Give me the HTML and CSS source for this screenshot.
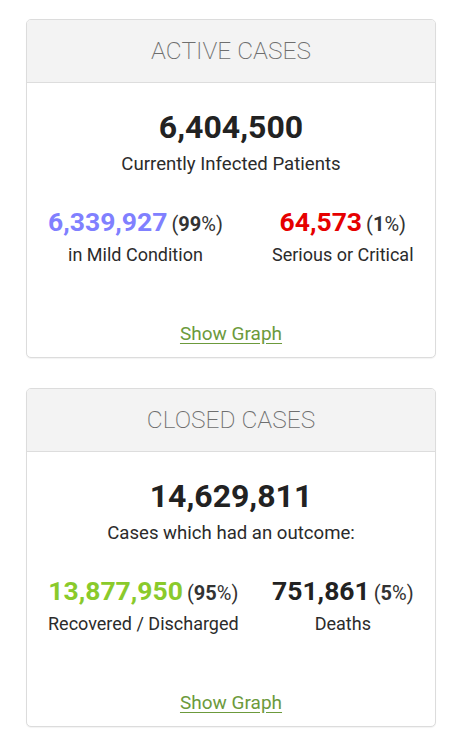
FILE: index.html
```html
<!DOCTYPE html>
<html>
<head>
<meta charset="utf-8">
<link rel="stylesheet" href="styles.css">
</head>
<body>
<div class="page">
  <div class="panel">
    <div class="panel-heading">ACTIVE CASES</div>
    <div class="panel-body">
      <div class="big-number">6,404,500</div>
      <div class="subtitle">Currently Infected Patients</div>
      <div class="split">
        <div class="cell">
          <div class="stat"><span class="num mild">6,339,927</span> <span class="pct">(<strong>99</strong>%)</span></div>
          <div class="label">in Mild Condition</div>
        </div>
        <div class="cell">
          <div class="stat"><span class="num critical">64,573</span> <span class="pct">(<strong>1</strong>%)</span></div>
          <div class="label">Serious or Critical</div>
        </div>
      </div>
      <div class="graph-link"><a href="#">Show Graph</a></div>
    </div>
  </div>

  <div class="panel">
    <div class="panel-heading">CLOSED CASES</div>
    <div class="panel-body">
      <div class="big-number">14,629,811</div>
      <div class="subtitle">Cases which had an outcome:</div>
      <div class="split">
        <div class="cell">
          <div class="stat"><span class="num recovered">13,877,950</span> <span class="pct">(<strong>95</strong>%)</span></div>
          <div class="label">Recovered / Discharged</div>
        </div>
        <div class="cell">
          <div class="stat"><span class="num deaths">751,861</span> <span class="pct">(<strong>5</strong>%)</span></div>
          <div class="label">Deaths</div>
        </div>
      </div>
      <div class="graph-link"><a href="#">Show Graph</a></div>
    </div>
  </div>
</div>
</body>
</html>
```

FILE: styles.css
```css
html, body {
  margin: 0;
  padding: 0;
  background: #ffffff;
}

body {
  font-family: Roboto, "Liberation Sans", Arial, sans-serif;
  color: #222;
}

.page {
  padding: 19px 16px 20px 26px;
  display: flex;
  flex-direction: column;
  gap: 30px;
}

.panel {
  border: 1px solid #dcdcdc;
  border-radius: 5px;
  box-shadow: 0 1px 1px rgba(0, 0, 0, 0.05);
  overflow: hidden;
  background: #fff;
}

.panel-heading {
  background: #f3f3f3;
  border-bottom: 1px solid #dddddd;
  height: 62px;
  line-height: 62px;
  text-align: center;
  font-weight: 200;
  font-size: 24.5px;
  color: #6e6e6e;
}

.panel-body {
  padding: 24px 0 11px;
  text-align: center;
}

.big-number {
  font-size: 32px;
  font-weight: 700;
  line-height: 40px;
  color: #222;
}

.subtitle {
  margin-top: 5px;
  font-size: 18.6px;
  line-height: 24px;
  color: #2b2b2b;
}

.split {
  display: grid;
  grid-template-columns: 224px 1fr;
  justify-items: start;
  margin-top: 30px;
  padding-left: 21px;
}

.cell {
  text-align: center;
}

.stat {
  line-height: 32px;
  white-space: nowrap;
}

.num {
  font-size: 26.5px;
  font-weight: 700;
}

.mild { color: #8080ff; }
.critical { color: #e60000; }
.recovered { color: #8aca2b; }
.deaths { color: #222; }

.pct {
  font-size: 20px;
  color: #333;
}

.pct strong {
  font-weight: 700;
}

.label {
  margin-top: 1px;
  font-size: 18px;
  line-height: 24px;
  color: #2b2b2b;
  white-space: nowrap;
}

.graph-link {
  margin-top: 55px;
  font-size: 19px;
  line-height: 24px;
}

.graph-link a {
  color: #6c9a3c;
  text-decoration: underline;
  text-underline-offset: 3px;
}
```
